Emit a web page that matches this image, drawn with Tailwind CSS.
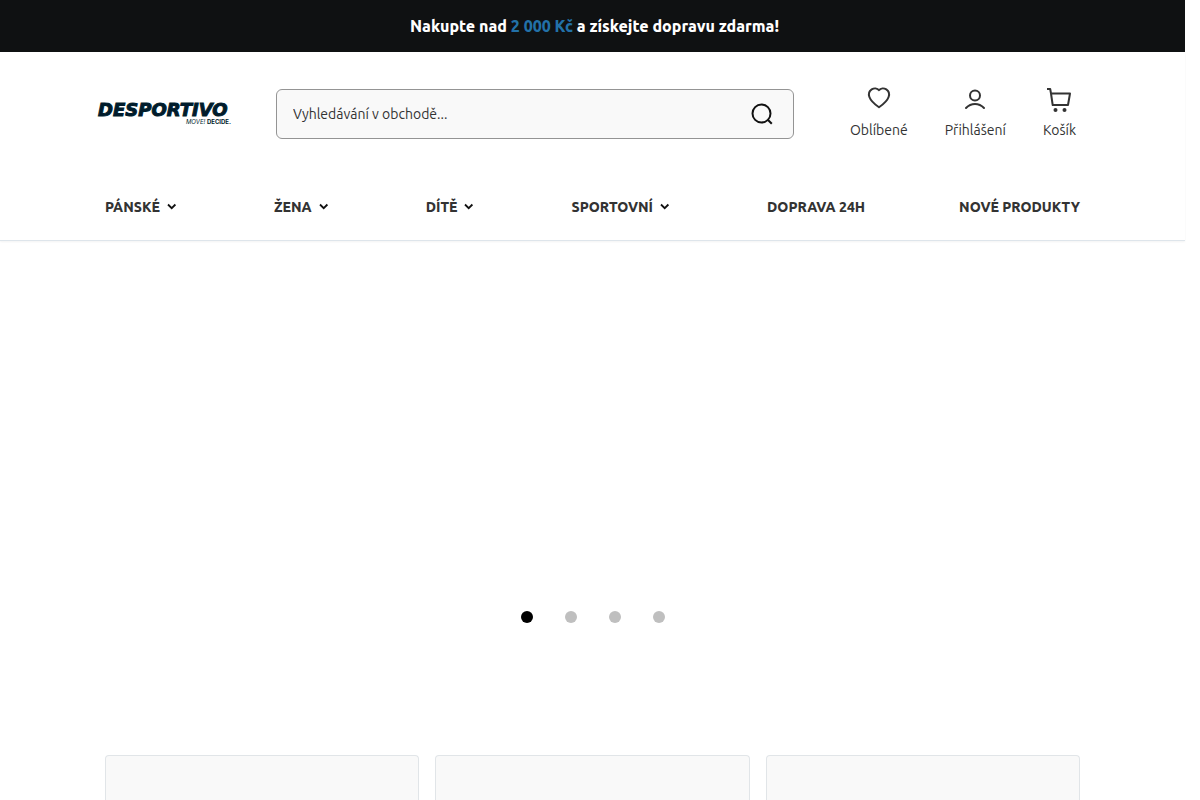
<!DOCTYPE html>
<html lang="cs">
<head>
<meta charset="utf-8">
<meta name="viewport" content="width=device-width, initial-scale=1">
<title>Desportivo</title>
<script src="https://cdn.jsdelivr.net/npm/@tailwindcss/browser@4"></script>
</head>
<body class="min-h-screen overflow-x-hidden bg-white pr-[15px] font-['Ubuntu','Noto_Sans',sans-serif] text-sm text-[#333333]">
<div class="flex h-13 items-center justify-center bg-[#0f1112] pl-1 text-base font-extrabold text-white">
  <p>Nakupte nad <span class="text-[#2271a8]">2 000 Kč</span> a získejte dopravu zdarma!</p>
</div>

<header class="border-b border-[#dee5eb] shadow-xs">
  <div class="mx-auto flex h-[124px] max-w-[989px] items-center">
    <a href="#" aria-label="Desportivo" class="flex w-[134px] shrink-0 flex-col text-[#001c2c] italic">
      <span class="font-['DejaVu_Sans',sans-serif] text-lg leading-4 font-bold [-webkit-text-stroke:1px_#001c2c]">DESPORTIVO</span>
      <span class="pr-px text-right font-['Inter',sans-serif] text-[6px] leading-2">MOVE! <b class="not-italic">DECIDE.</b></span>
    </a>
    <form class="ml-11 flex h-[50px] min-w-0 flex-1 items-center rounded-md border border-[#949494] bg-[#f9f9f9] pr-5 pl-4">
      <input type="text" aria-label="Vyhledávání v obchodě" placeholder="Vyhledávání v obchodě..." class="min-w-0 flex-1 bg-transparent outline-none placeholder:text-[#333333]">
      <button type="button" aria-label="Hledat">
        <svg class="size-[22px]" viewBox="0 0 22 22" fill="none" stroke="#111" stroke-width="2"><circle cx="10.5" cy="10.5" r="9"/><path d="m16.800 16.800 4 4"/></svg>
      </button>
    </form>
    <nav aria-label="Účet" class="mr-[11px] ml-14 flex shrink-0 gap-[37px] pb-1">
      <a href="#" class="flex flex-col items-center">
        <svg class="size-7" viewBox="0 0 28 28" fill="none" stroke="#333" stroke-width="2" stroke-linejoin="round"><path d="M14 6.200C12.200 4 9 3.900 6.700 5.400C4.200 7 3.500 10.300 4.400 13C5.700 16.800 10 20.500 14 23.300C18 20.500 22.300 16.800 23.600 13C24.500 10.300 23.800 7 21.300 5.400C19 3.900 15.800 4 14 6.200Z"/></svg>
        <span class="mt-2 leading-5">Oblíbené</span>
      </a>
      <a href="#" class="flex flex-col items-center">
        <svg class="size-7" viewBox="0 0 28 28" fill="none" stroke="#333" stroke-width="2" stroke-linecap="round"><circle cx="14" cy="11.500" r="5"/><path d="M5 24c2.500-2.600 5.500-4 9-4s6.500 1.400 9 4"/></svg>
        <span class="mt-2 leading-5">Přihlášení</span>
      </a>
      <a href="#" class="flex flex-col items-center">
        <svg class="size-7" viewBox="0 0 28 28" fill="none" stroke="#333" stroke-width="2" stroke-linejoin="round"><path d="M2 5h3.200l.8 4.500h19l-2 11.500H7.700L6 9.500"/><circle cx="10.500" cy="26" r="2" fill="#333" stroke="none"/><circle cx="19.500" cy="26" r="2" fill="#333" stroke="none"/></svg>
        <span class="mt-2 leading-5">Košík</span>
      </a>
    </nav>
  </div>
  <nav aria-label="Kategorie" class="mx-auto flex h-16 max-w-[975px] items-center justify-between pb-0.5 font-extrabold">
    <a href="#" class="flex items-center gap-2 pr-1">PÁNSKÉ <svg class="size-2 overflow-visible" viewBox="0 0 8 8" fill="none" stroke="#111" stroke-width="1.8"><path d="m0 1.500 3.700 3.700 3.700-3.700"/></svg></a>
    <a href="#" class="flex items-center gap-2 pr-1">ŽENA <svg class="size-2 overflow-visible" viewBox="0 0 8 8" fill="none" stroke="#111" stroke-width="1.8"><path d="m0 1.500 3.700 3.700 3.700-3.700"/></svg></a>
    <a href="#" class="flex items-center gap-2 pr-1">DÍTĚ <svg class="size-2 overflow-visible" viewBox="0 0 8 8" fill="none" stroke="#111" stroke-width="1.8"><path d="m0 1.500 3.700 3.700 3.700-3.700"/></svg></a>
    <a href="#" class="flex items-center gap-2 pr-1">SPORTOVNÍ <svg class="size-2 overflow-visible" viewBox="0 0 8 8" fill="none" stroke="#111" stroke-width="1.8"><path d="m0 1.500 3.700 3.700 3.700-3.700"/></svg></a>
    <a href="#">DOPRAVA 24H</a>
    <a href="#">NOVÉ PRODUKTY</a>
  </nav>
</header>

<main>
  <section aria-label="Novinky" class="flex justify-center gap-8 pt-[370px] pb-33">
    <button type="button" aria-label="Snímek 1" class="size-3 rounded-full bg-black"></button>
    <button type="button" aria-label="Snímek 2" class="size-3 rounded-full bg-[#bfbfbf]"></button>
    <button type="button" aria-label="Snímek 3" class="size-3 rounded-full bg-[#bfbfbf]"></button>
    <button type="button" aria-label="Snímek 4" class="size-3 rounded-full bg-[#bfbfbf]"></button>
  </section>
  <section aria-label="Nabídka" class="mx-auto grid max-w-[975px] grid-cols-3 gap-4">
    <div class="h-[45px] rounded-t border border-b-0 border-[#e1e5e8] bg-[#f9f9f9]"></div>
    <div class="h-[45px] rounded-t border border-b-0 border-[#e1e5e8] bg-[#f9f9f9]"></div>
    <div class="h-[45px] rounded-t border border-b-0 border-[#e1e5e8] bg-[#f9f9f9]"></div>
  </section>
</main>
</body>
</html>
